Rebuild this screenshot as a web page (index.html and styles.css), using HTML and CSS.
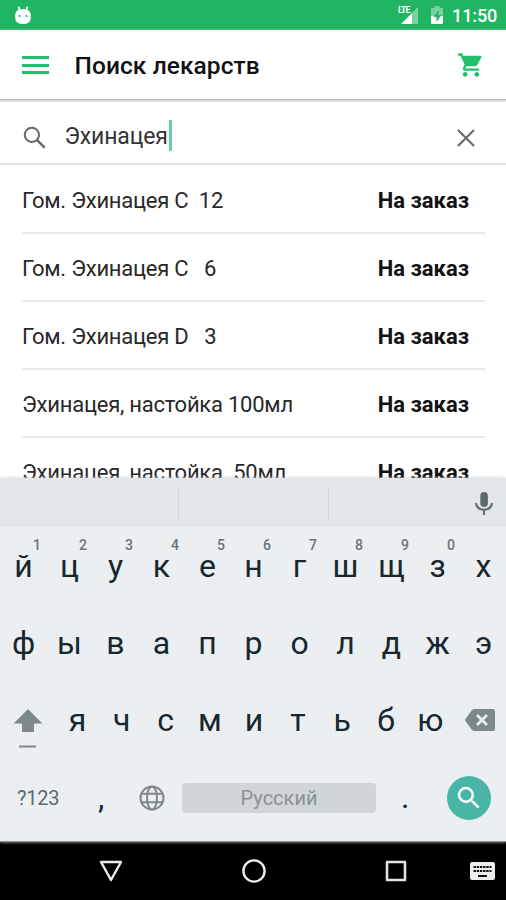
FILE: index.html
```html
<!DOCTYPE html>
<html lang="ru">
<head>
<meta charset="utf-8">
<title>Поиск лекарств</title>
<link rel="stylesheet" href="styles.css">
</head>
<body>
<div class="screen">
  <div class="status">
    <svg class="status-bug" width="18" height="20" viewBox="0 0 18 20"><path d="M4.500 1.500l1.200 4M13.500 1.500l-1.200 4" stroke="#fff" stroke-width="1.600"/><path d="M1.200 10Q1.500 4 9 4t7.800 6v3Q16.500 19 9 19t-7.800-6z" fill="#fff"/><circle cx="5.500" cy="11" r="1" fill="#20b563"/><circle cx="12.500" cy="11" r="1" fill="#20b563"/></svg>
    <div class="signal">
      <svg width="22" height="20" viewBox="0 0 22 20"><path d="M21 2v17H15V8z" fill="#fff" opacity=".4"/><path d="M15 8v11H4z" fill="#fff"/></svg>
      <span class="lte">LTE</span>
    </div>
    <svg class="battery" width="12" height="20" viewBox="0 0 12 20"><path d="M3.500 1h5v2H12v8H0V3h3.500z" fill="#fff" opacity=".4"/><path d="M0 11h12v7q0 1-1 1H1q-1 0-1-1z" fill="#fff"/><path d="M7.500 5L2.500 12h3v5l5-7h-3z" fill="#20b563"/></svg>
    <span class="clock">11:50</span>
  </div>
  <header class="bar">
    <div class="burger"><i></i><i></i><i></i></div>
    <h1>Поиск лекарств</h1>
    <svg class="cart" width="28" height="28" viewBox="0 0 24 24"><path fill="#20c06c" d="M7 18c-1.100 0-1.990.9-1.990 2S5.900 22 7 22s2-.9 2-2-.9-2-2-2zM1 2v2h2l3.600 7.590-1.350 2.450c-.16.28-.25.61-.25.96 0 1.100.9 2 2 2h12v-2H7.420c-.14 0-.25-.11-.25-.25l.03-.12.9-1.630h7.450c.75 0 1.410-.41 1.750-1.030l3.580-6.490A1 1 0 0 0 20 4H5.210l-.94-2H1zm16 16c-1.100 0-1.990.9-1.990 2s.89 2 1.990 2 2-.9 2-2-.9-2-2-2z"/></svg>
  </header>
  <div class="search">
    <svg class="lens" width="30" height="30" viewBox="0 0 24 24"><circle cx="9.500" cy="9.500" r="5.700" fill="none" stroke="#666" stroke-width="1.600"/><path d="M13.700 13.700l6 6" stroke="#666" stroke-width="2"/></svg>
    <span class="query">Эхинацея</span><i class="caret"></i>
    <svg class="clear" width="18" height="18" viewBox="0 0 18 18"><path d="M1 1l16 16M17 1L1 17" stroke="#666" stroke-width="2"/></svg>
  </div>
  <main class="list">
    <div class="item"><span class="name">Гом. Эхинацея C  12</span><b>На заказ</b></div>
    <div class="item"><span class="name">Гом. Эхинацея C   6</span><b>На заказ</b></div>
    <div class="item"><span class="name">Гом. Эхинацея D   3</span><b>На заказ</b></div>
    <div class="item"><span class="name">Эхинацея, настойка 100мл</span><b>На заказ</b></div>
    <div class="item"><span class="name">Эхинацея, настойка  50мл</span><b>На заказ</b></div>
  </main>
  <section class="keyboard">
    <div class="strip">
      <i></i><i></i>
      <svg class="mic" width="18" height="25" viewBox="0 0 18 25"><rect x="5.300" y="1" width="7.600" height="15" rx="3.800" fill="#5c6a70"/><path d="M1 12c.6 4.500 3.800 6.700 8 6.700s7.400-2.200 8-6.700M9 18.500V24" fill="none" stroke="#5c6a70" stroke-width="2"/></svg>
    </div>
    <div class="row top">
      <span>й<sup>1</sup></span><span>ц<sup>2</sup></span><span>у<sup>3</sup></span><span>к<sup>4</sup></span><span>е<sup>5</sup></span><span>н<sup>6</sup></span><span>г<sup>7</sup></span><span>ш<sup>8</sup></span><span>щ<sup>9</sup></span><span>з<sup>0</sup></span><span>х</span>
    </div>
    <div class="row"><span>ф</span><span>ы</span><span>в</span><span>а</span><span>п</span><span>р</span><span>о</span><span>л</span><span>д</span><span>ж</span><span>э</span></div>
    <div class="row third">
      <svg class="shift" width="30" height="40" viewBox="0 0 30 40"><path d="M15 1L29.500 15.500H21V24H9v-8.500H.5z" fill="#7d888b"/><path d="M6 38.500h17" stroke="#7d888b" stroke-width="2"/></svg>
      <span>я</span><span>ч</span><span>с</span><span>м</span><span>и</span><span>т</span><span>ь</span><span>б</span><span>ю</span>
      <svg class="back" width="30" height="22" viewBox="0 0 30 22"><path d="M9 0h18.500Q30 0 30 2.500v17Q30 22 27.500 22H9L7 21 .6 12.300Q0 11 .6 9.700L7 1z" fill="#7d888b"/><path d="M12 6l10 10M22 6L12 16" stroke="#eceff1" stroke-width="2.800"/></svg>
    </div>
    <div class="bottom">
      <span class="sym">?123</span>
      <span class="comma">,</span>
      <svg class="globe" width="26" height="26" viewBox="0 0 26 26" fill="none" stroke="#7d888b" stroke-width="2"><circle cx="13" cy="13" r="11.500"/><ellipse cx="13" cy="13" rx="5" ry="11.500"/><path d="M2.500 8.800h21M2.500 17.200h21"/></svg>
      <span class="space">Русский</span>
      <span class="dot">.</span>
      <span class="go"><svg width="30" height="30" viewBox="0 0 24 24"><path fill="#fff" d="M15.500 14h-.79l-.28-.27A6.470 6.470 0 0 0 16 9.500 6.500 6.500 0 1 0 9.500 16c1.610 0 3.090-.59 4.230-1.570l.27.28v.79l5 4.990L20.490 19l-4.990-5zm-6 0a4.500 4.500 0 1 1 0-9 4.500 4.500 0 0 1 0 9z"/></svg></span>
    </div>
  </section>
  <nav class="nav">
    <svg class="nav-back" width="24" height="22" viewBox="0 0 24 22"><path d="M2 2h20L12 20z" fill="none" stroke="#eee" stroke-width="2.400" stroke-linejoin="round"/></svg>
    <svg class="nav-home" width="24" height="24" viewBox="0 0 24 24"><circle cx="12" cy="12" r="10.600" fill="none" stroke="#eee" stroke-width="2.400"/></svg>
    <svg class="nav-recent" width="22" height="22" viewBox="0 0 22 22"><rect x="2" y="2" width="18" height="18" fill="none" stroke="#e4e4e4" stroke-width="2.600" stroke-linejoin="round"/></svg>
    <svg class="nav-keys" width="25" height="18" viewBox="0 0 25 18"><rect width="25" height="18" rx="2" fill="#eee"/><path d="M3.500 5h18M3.500 9h18" stroke="#111" stroke-width="2.200" stroke-dasharray="2.400 .8"/><path d="M8 14h9" stroke="#111" stroke-width="2"/></svg>
  </nav>
</div>
</body>
</html>
```
FILE: styles.css
```css
* { box-sizing: border-box; }
body { margin: 0; font-family: Roboto, "Liberation Sans", sans-serif; color: #282828; }
svg { display: block; flex: none; }
.screen { width: 506px; height: 900px; overflow: hidden; display: flex; flex-direction: column; background: #fff; }

.status { height: 30px; flex: none; background: #20b563; display: flex; align-items: center; color: #fff; }
.status-bug { margin-left: 14px; }
.signal { position: relative; margin-left: auto; }
.lte { position: absolute; left: 1px; top: 1px; font-size: 9px; line-height: 9px; font-weight: 700; letter-spacing: -1px; }
.battery { margin-left: 12px; }
.clock { width: 45px; margin: 2px 9px 0 9px; font-size: 18px; line-height: 20px; font-weight: 500; letter-spacing: -.1px; white-space: nowrap; }

.bar { height: 69px; flex: none; display: flex; align-items: center; box-shadow: 0 1px 2px 1px #b8bbba; position: relative; }
.burger { width: 27px; margin: 1px 0 0 22px; display: flex; flex-direction: column; gap: 4.500px; }
.burger i { height: 3px; background: #20c06c; }
.bar h1 { margin: 3px 0 0 25.500px; font-size: 24.500px; line-height: 30px; font-weight: 500; letter-spacing: .07px; color: #111; white-space: nowrap; }
.cart { margin: 0 21px 0 auto; }

.search { height: 66px; flex: none; display: flex; align-items: center; padding-top: 9px; border-bottom: 2px solid #e4e4e4; }
.lens { margin: 5px 0 0 20px; }
.query { margin: 2px 0 0 14.500px; font-size: 23px; line-height: 30px; letter-spacing: -.15px; white-space: nowrap; color: #333; }
.caret { width: 3px; height: 31px; margin: 0 0 1px 1px; background: #62d59a; }
.clear { margin: 4px 31px 0 auto; }

.list { height: 313px; flex: none; overflow: hidden; padding: 1px 21px 0 22px; }
.item { height: 68px; display: flex; align-items: center; justify-content: space-between; padding: 2px 16px 0 0; border-bottom: 2px solid #e9e9e9; font-size: 22px; white-space: pre; }
.name { letter-spacing: -.24px; }
.item b { font-weight: 700; color: #111; }

.keyboard { height: 364px; flex: none; background: #eceff1; border-bottom: 1px solid #8c8f90; color: #17272e; box-shadow: 0 0 3px #ccc; position: relative; }
.strip { height: 49px; background: #e4e7e9; display: flex; align-items: center; }
.strip i { width: 1px; height: 30px; background: #cfd4d6; margin: 2px 0 0 178px; }
.strip i + i { margin-left: 149px; }
.mic { margin: 2px 13px 0 auto; }
.row { height: 77px; display: grid; grid-template-columns: repeat(11, 46px); font-size: 32px; line-height: 79px; padding-left: .5px; text-align: center; }
.row span { position: relative; }
.row sup { position: absolute; left: 30.500px; top: 10px; width: 12px; font-size: 14px; line-height: 16px; color: #66757b; font-weight: 500; }
.third { grid-template-columns: 55px repeat(9, 44.100px) 1fr; }
.shift { margin: 27px 0 0 12px; }
.back { margin: 28px 0 0 12.500px; }
.bottom { height: 80px; display: flex; align-items: center; }
.sym { width: 44px; margin-left: 17px; font-size: 20px; letter-spacing: -.2px; color: #5d6a6f; }
.comma { width: 10px; margin: -2px 0 0 37px; font-size: 32px; }
.globe { margin: -1px 0 0 31px; }
.space { width: 194px; height: 30px; margin: -1px 0 0 17px; border-radius: 4px; background: #d0d5d8; color: #899296; font-size: 20px; line-height: 30px; text-align: center; }
.dot { width: 10px; margin: -2px 0 0 25px; font-size: 32px; }
.go { width: 44px; height: 44px; margin: -1px 0 0 36px; border-radius: 50%; background: #48b5a6; display: grid; place-items: center; }

.nav { height: 58px; flex: none; background: #000; display: flex; align-items: center; }
.nav-back { margin-left: 99px; }
.nav-home { margin-left: 118.500px; }
.nav-recent { margin-left: 119.500px; }
.nav-keys { margin-left: 63px; }
```
